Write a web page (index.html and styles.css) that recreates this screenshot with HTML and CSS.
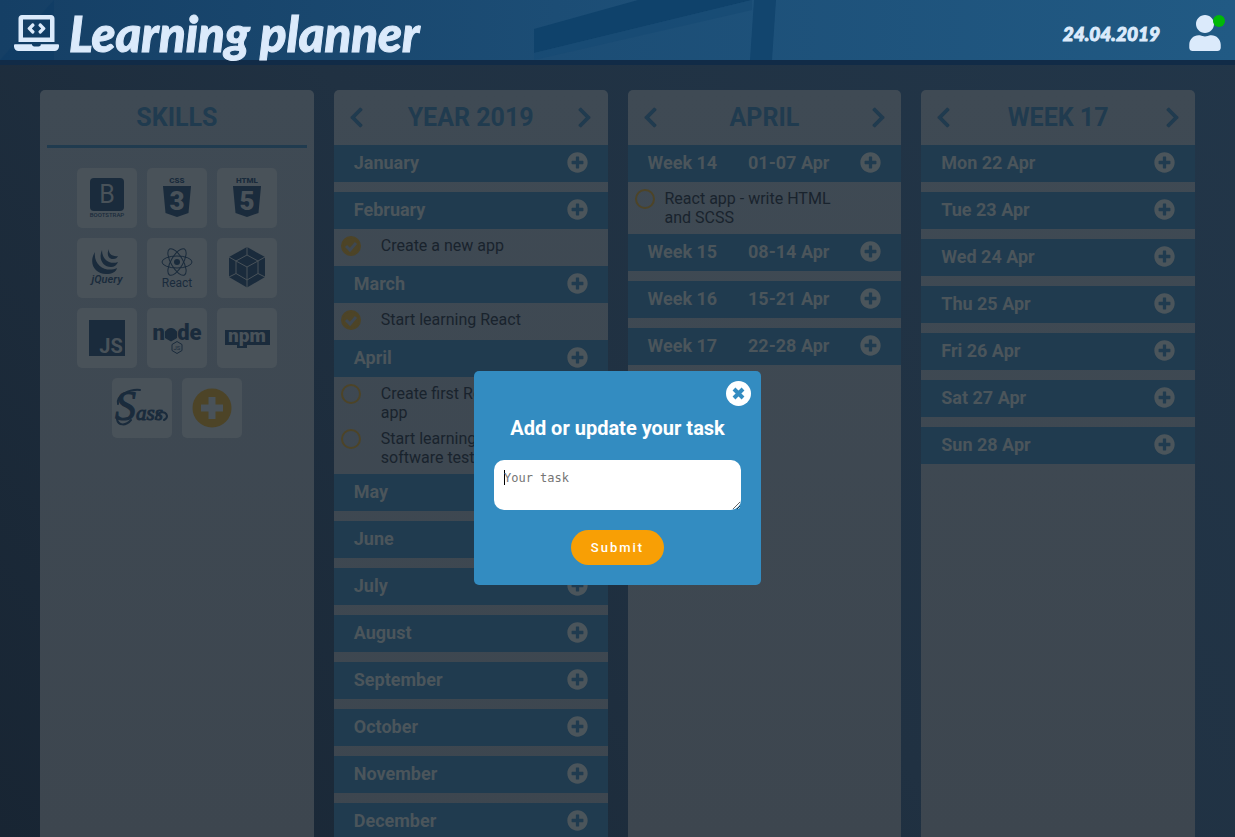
FILE: index.html
```html
<!DOCTYPE html>
<html lang="en">
<head>
<meta charset="utf-8">
<title>Learning planner</title>
<link rel="stylesheet" href="styles.css">
</head>
<body>
<svg class="sprite" aria-hidden="true">
  <symbol id="plus" viewBox="0 0 512 512"><path d="M256 8C119 8 8 119 8 256s111 248 248 248 248-111 248-248S393 8 256 8zm144 276c0 6.600-5.400 12-12 12h-92v92c0 6.600-5.400 12-12 12h-56c-6.600 0-12-5.400-12-12v-92h-92c-6.600 0-12-5.400-12-12v-56c0-6.600 5.400-12 12-12h92v-92c0-6.600 5.400-12 12-12h56c6.600 0 12 5.400 12 12v92h92c6.600 0 12 5.400 12 12v56z"/></symbol>
  <symbol id="prev" viewBox="0 0 320 512"><path d="M34.520 239.030L228.870 44.690c9.370-9.370 24.570-9.370 33.940 0l22.670 22.670c9.360 9.360 9.370 24.520.040 33.900L131.490 256l154.020 154.750c9.340 9.380 9.320 24.540-.040 33.900l-22.670 22.670c-9.370 9.370-24.570 9.370-33.940 0L34.520 272.970c-9.370-9.370-9.370-24.570 0-33.940z"/></symbol>
  <symbol id="next" viewBox="0 0 320 512"><path transform="matrix(-1 0 0 1 320 0)" d="M34.520 239.030L228.870 44.690c9.370-9.370 24.570-9.370 33.940 0l22.670 22.670c9.360 9.360 9.370 24.520.040 33.900L131.490 256l154.020 154.750c9.340 9.380 9.320 24.540-.040 33.900l-22.670 22.670c-9.370 9.370-24.570 9.370-33.940 0L34.520 272.970c-9.370-9.370-9.370-24.570 0-33.940z"/></symbol>
</svg>

<header class="header">
  <svg class="header-art" viewBox="0 0 1235 60" preserveAspectRatio="xMidYMin slice" aria-hidden="true">
    <path d="M0 60 L54 0 V60z" fill="#0c3a63" opacity=".5"/>
    <path d="M534 29 L638 0 H752 L534 53z" fill="#0f426b"/>
    <path d="M534 53 L752 0 V10 L534 60z" fill="#174a73" opacity=".7"/>
    <path d="M754 0h22l-4 60h-22z" fill="#12456e"/>
  </svg>
  <svg class="logo" viewBox="0 0 640 512" aria-hidden="true"><path d="M255.030 261.650c6.250 6.250 16.380 6.250 22.630 0l11.310-11.310c6.250-6.250 6.250-16.380 0-22.630L253.250 192l35.710-35.720c6.250-6.250 6.250-16.380 0-22.630l-11.310-11.310c-6.250-6.250-16.380-6.250-22.630 0l-58.340 58.340c-6.250 6.250-6.250 16.380 0 22.630l58.350 58.340zm96.010-11.300l11.310 11.310c6.250 6.250 16.380 6.250 22.630 0l58.340-58.340c6.250-6.250 6.250-16.380 0-22.630l-58.340-58.340c-6.250-6.250-16.380-6.250-22.630 0l-11.310 11.310c-6.250 6.250-6.250 16.380 0 22.630L386.750 192l-35.710 35.720c-6.250 6.250-6.250 16.380 0 22.630zM624 416H381.540c-.740 19.810-14.710 32-32.740 32H288c-18.690 0-33.020-17.470-32.770-32H16c-8.800 0-16 7.200-16 16v16c0 35.200 28.800 64 64 64h512c35.200 0 64-28.800 64-64v-16c0-8.800-7.200-16-16-16zM576 48c0-26.400-21.600-48-48-48H112C85.600 0 64 21.600 64 48v336h512V48zm-64 272H128V64h384v256z"/></svg>
  <h1 class="title">Learning planner</h1>
  <time class="date" datetime="2019-04-24">24.04.2019</time>
  <button class="user" aria-label="Account">
    <svg viewBox="0 0 448 512" aria-hidden="true"><path d="M224 256c70.700 0 128-57.300 128-128S294.700 0 224 0 96 57.300 96 128s57.300 128 128 128zm89.600 32h-16.700c-22.200 10.200-46.900 16-72.900 16s-50.600-5.800-72.900-16h-16.700C60.200 288 0 348.200 0 422.400V464c0 26.500 21.500 48 48 48h352c26.500 0 48-21.500 48-48v-41.600c0-74.200-60.200-134.400-134.400-134.400z"/></svg>
    <span class="online"></span>
  </button>
</header>

<main class="board">
  <section class="column">
    <div class="column-head skills-head"><h2>SKILLS</h2></div>
    <ul class="skills">
      <li class="tile"><svg viewBox="0 0 60 60" role="img" aria-label="Bootstrap"><rect x="13" y="10" width="34" height="33" rx="4"/><text class="cut" x="30" y="35" font-size="25">B</text><text x="30" y="49" font-size="6" font-weight="500">BOOTSTRAP</text></svg></li>
      <li class="tile"><svg viewBox="0 0 60 60" role="img" aria-label="CSS 3"><text x="30" y="15" font-size="8" font-weight="900">CSS</text><path d="M16 18h28l-2.500 27L30 49l-11.500-4z"/><text class="cut" x="30" y="42" font-size="26" font-weight="900">3</text></svg></li>
      <li class="tile"><svg viewBox="0 0 60 60" role="img" aria-label="HTML 5"><text x="30" y="15" font-size="8" font-weight="900">HTML</text><path d="M16 18h28l-2.500 27L30 49l-11.500-4z"/><text class="cut" x="30" y="42" font-size="26" font-weight="900">5</text></svg></li>
      <li class="tile"><svg viewBox="0 0 60 60" role="img" aria-label="jQuery"><path d="M18 14C11 25 18 36 29 36c6 0 10-2 11-6-10 5-24-2-22-16z"/><path d="M25 12c-4 9 1 17 9 17 3 0 6-2 7-5-8 3-16-2-16-12z"/><path d="M32 11c-3 6 0 10 4 10 3 0 4-1 5-3-5 1-10-2-9-7z"/><text x="30" y="45" font-size="11" font-weight="600" font-style="italic">jQuery</text></svg></li>
      <li class="tile"><svg viewBox="0 0 60 60" role="img" aria-label="React"><g class="line"><ellipse cx="30" cy="24" rx="15" ry="6"/><ellipse cx="30" cy="24" rx="15" ry="6" transform="rotate(60 30 24)"/><ellipse cx="30" cy="24" rx="15" ry="6" transform="rotate(120 30 24)"/></g><circle cx="30" cy="24" r="3"/><text x="30" y="49" font-size="12" font-weight="400">React</text></svg></li>
      <li class="tile"><svg viewBox="0 0 60 60" role="img" aria-label="Webpack"><path d="M30 9l18 10v20L30 49.500 12 39V19z"/><path class="gap" d="M30 17l11 6v12.500L30 42l-11-6.500V23zM30 9v8M48 19l-7 4M48 39l-7-3.500M30 50v-8M12 39l7-3.500M12 19l7 4M19 23l11 6 11-6M30 29v13"/></svg></li>
      <li class="tile"><svg viewBox="0 0 60 60" role="img" aria-label="JavaScript"><rect x="12" y="12" width="36" height="36"/><text class="cut" x="34" y="45" font-size="20" font-weight="700">JS</text></svg></li>
      <li class="tile"><svg viewBox="0 0 60 60" role="img" aria-label="Node"><text x="30" y="32" font-size="22" font-weight="900">node</text><path d="M24 20l6 3.500v6.500l-6 3.500-6-3.500v-6.500z"/><path class="line" d="M30 33.500l5 3v6l-5 3-5-3v-6z"/><text x="30" y="42" font-size="6">JS</text></svg></li>
      <li class="tile"><svg viewBox="0 0 60 60" role="img" aria-label="npm"><path d="M8 22h45v15H30v3h-10v-3H8z"/><text class="cut" x="30" y="34" font-size="19" font-weight="900">npm</text></svg></li>
      <li class="tile"><svg viewBox="0 0 60 60" role="img" aria-label="Sass"><text class="script" x="27" y="42" font-size="21"><tspan font-size="42">S</tspan>ass</text><path class="line swash" d="M44 41c1-8 10-9 11-3 0 2-1 3-3 4M6 26c-2-9 12-15 22-14M5 41c1 7 9 7 14 1"/></svg></li>
      <li><button class="tile add-skill" aria-label="Add skill"><svg viewBox="0 0 60 60" aria-hidden="true"><circle cx="30" cy="30" r="19.500"/><path class="cross" d="M30 19v22M19 30h22"/></svg></button></li>
    </ul>
  </section>

  <section class="column">
    <div class="column-head"><button aria-label="Previous year"><svg><use href="#prev"/></svg></button><h2>YEAR 2019</h2><button aria-label="Next year"><svg><use href="#next"/></svg></button></div>
    <div class="period"><h3>January</h3><button aria-label="Add to January"><svg><use href="#plus"/></svg></button></div>
    <div class="period"><h3>February</h3><button aria-label="Add to February"><svg><use href="#plus"/></svg></button></div>
    <ul class="tasks year-tasks"><li><input type="checkbox" id="t1" checked><label for="t1">Create a new app</label></li></ul>
    <div class="period"><h3>March</h3><button aria-label="Add to March"><svg><use href="#plus"/></svg></button></div>
    <ul class="tasks year-tasks"><li><input type="checkbox" id="t2" checked><label for="t2">Start learning React</label></li></ul>
    <div class="period"><h3>April</h3><button aria-label="Add to April"><svg><use href="#plus"/></svg></button></div>
    <ul class="tasks year-tasks"><li><input type="checkbox" id="t3"><label for="t3">Create first React app</label></li><li><input type="checkbox" id="t4"><label for="t4">Start learning software testing</label></li></ul>
    <div class="period"><h3>May</h3><button aria-label="Add to May"><svg><use href="#plus"/></svg></button></div>
    <div class="period"><h3>June</h3><button aria-label="Add to June"><svg><use href="#plus"/></svg></button></div>
    <div class="period"><h3>July</h3><button aria-label="Add to July"><svg><use href="#plus"/></svg></button></div>
    <div class="period"><h3>August</h3><button aria-label="Add to August"><svg><use href="#plus"/></svg></button></div>
    <div class="period"><h3>September</h3><button aria-label="Add to September"><svg><use href="#plus"/></svg></button></div>
    <div class="period"><h3>October</h3><button aria-label="Add to October"><svg><use href="#plus"/></svg></button></div>
    <div class="period"><h3>November</h3><button aria-label="Add to November"><svg><use href="#plus"/></svg></button></div>
    <div class="period"><h3>December</h3><button aria-label="Add to December"><svg><use href="#plus"/></svg></button></div>
  </section>

  <section class="column">
    <div class="column-head"><button aria-label="Previous month"><svg><use href="#prev"/></svg></button><h2>APRIL</h2><button aria-label="Next month"><svg><use href="#next"/></svg></button></div>
    <div class="period"><h3>Week 14</h3><span>01-07 Apr</span><button aria-label="Add to week 14"><svg><use href="#plus"/></svg></button></div>
    <ul class="tasks"><li><input type="checkbox" id="t5"><label for="t5">React app - write HTML and SCSS</label></li></ul>
    <div class="period"><h3>Week 15</h3><span>08-14 Apr</span><button aria-label="Add to week 15"><svg><use href="#plus"/></svg></button></div>
    <div class="period"><h3>Week 16</h3><span>15-21 Apr</span><button aria-label="Add to week 16"><svg><use href="#plus"/></svg></button></div>
    <div class="period"><h3>Week 17</h3><span>22-28 Apr</span><button aria-label="Add to week 17"><svg><use href="#plus"/></svg></button></div>
  </section>

  <section class="column">
    <div class="column-head"><button aria-label="Previous week"><svg><use href="#prev"/></svg></button><h2>WEEK 17</h2><button aria-label="Next week"><svg><use href="#next"/></svg></button></div>
    <div class="period"><h3>Mon 22 Apr</h3><button aria-label="Add to Monday"><svg><use href="#plus"/></svg></button></div>
    <div class="period"><h3>Tue 23 Apr</h3><button aria-label="Add to Tuesday"><svg><use href="#plus"/></svg></button></div>
    <div class="period"><h3>Wed 24 Apr</h3><button aria-label="Add to Wednesday"><svg><use href="#plus"/></svg></button></div>
    <div class="period"><h3>Thu 25 Apr</h3><button aria-label="Add to Thursday"><svg><use href="#plus"/></svg></button></div>
    <div class="period"><h3>Fri 26 Apr</h3><button aria-label="Add to Friday"><svg><use href="#plus"/></svg></button></div>
    <div class="period"><h3>Sat 27 Apr</h3><button aria-label="Add to Saturday"><svg><use href="#plus"/></svg></button></div>
    <div class="period"><h3>Sun 28 Apr</h3><button aria-label="Add to Sunday"><svg><use href="#plus"/></svg></button></div>
  </section>
</main>

<div class="overlay">
  <form class="modal" role="dialog" aria-labelledby="modal-title">
    <button type="button" class="close" aria-label="Close"><svg viewBox="0 0 25 25" aria-hidden="true"><circle cx="12.500" cy="12.500" r="12.500"/><path d="M8 8l9 9M17 8l-9 9"/></svg></button>
    <label class="modal-title" id="modal-title" for="task">Add or update your task</label>
    <textarea id="task" placeholder="Your task" autofocus></textarea>
    <button type="submit" class="submit">Submit</button>
  </form>
</div>
</body>
</html>
```
FILE: styles.css
```css
* {
  box-sizing: border-box;
}

html,
body {
  height: 100%;
  margin: 0;
}

body {
  display: flex;
  flex-direction: column;
  overflow: hidden;
  font-family: Roboto, "Liberation Sans", sans-serif;
  font-size: 16px;
  line-height: 19px;
  background: linear-gradient(50deg, #182533, #203142 50%, #223649);
}

h1,
h2,
h3,
ul {
  margin: 0;
  padding: 0;
  list-style: none;
}

button {
  padding: 0;
  border: 0;
  background: none;
  font-family: inherit;
  cursor: pointer;
}

svg {
  display: block;
  fill: currentColor;
}

.sprite {
  position: absolute;
  width: 0;
  height: 0;
}

.header {
  position: relative;
  flex: none;
  display: flex;
  align-items: center;
  height: 65px;
  padding: 6px 14px 0;
  border-bottom: 5px solid #112b47;
  background: linear-gradient(90deg, #153f65, #1c4d75 45%, #215a84);
  color: #dbeafb;
}

.header-art {
  position: absolute;
  inset: 0;
  width: 100%;
  height: 100%;
}

.logo,
.title,
.date,
.user {
  position: relative;
}

.logo {
  width: 45px;
  height: 36px;
}

.title {
  margin-left: 10px;
  font-family: Lato, sans-serif;
  font-size: 49px;
  font-style: italic;
  font-weight: 900;
  line-height: 54px;
  -webkit-text-stroke: 1px currentColor;
}

.date {
  margin-left: auto;
  font-family: Lato, sans-serif;
  font-size: 19px;
  font-style: italic;
  font-weight: 900;
  -webkit-text-stroke: 1px currentColor;
}

.user {
  margin-left: 29px;
  color: inherit;
}

.user svg {
  width: 32px;
  height: 36px;
}

.online {
  position: absolute;
  top: 0;
  right: -4px;
  width: 12px;
  height: 12px;
  border-radius: 50%;
  background: #00b906;
}

.board {
  flex: 1;
  min-height: 0;
  display: grid;
  grid-template-columns: repeat(4, 1fr);
  gap: 20px;
  padding: 25px 40px 0;
}

.column {
  min-height: 0;
  overflow: hidden;
  border-radius: 5px 5px 0 0;
  background: linear-gradient(#3f4a54, #3d464f);
}

.column-head {
  display: flex;
  align-items: center;
  justify-content: space-between;
  height: 55px;
  padding: 0 15px;
  color: #203b4f;
}

.column-head h2 {
  font-size: 25px;
  font-weight: 700;
  line-height: 30px;
}

.column-head svg {
  width: 15px;
  height: 23px;
  stroke: currentColor;
  stroke-width: 1;
}

.column-head button {
  color: inherit;
}

.skills-head {
  justify-content: center;
  height: 58px;
  margin: 0 7px 20px;
  border-bottom: 3px solid #203b4f;
}

.skills {
  display: flex;
  flex-wrap: wrap;
  justify-content: center;
  gap: 10px;
  max-width: 220px;
  margin: 0 auto;
}

.tile {
  display: block;
  width: 60px;
  height: 60px;
  border-radius: 5px;
  background: #495259;
  color: #1a2b3c;
}

.tile text {
  text-anchor: middle;
}

.tile .cut {
  fill: #495259;
}

.tile .line {
  fill: none;
  stroke: currentColor;
  stroke-width: 1;
}

.tile .swash {
  stroke-width: 2;
  stroke-linecap: round;
}

.tile .gap {
  fill: none;
  stroke: #495259;
  stroke-width: 1;
}

.tile .script {
  font-family: "Liberation Serif", serif;
  font-style: italic;
  font-weight: 400;
  stroke: currentColor;
  stroke-width: 1;
}

.tile.add-skill {
  color: #4d4427;
}

.cross {
  stroke: #495259;
  stroke-width: 7;
}

.period {
  display: flex;
  align-items: center;
  justify-content: space-between;
  height: 37px;
  padding: 0 20px 2px;
  background: #203b4f;
  color: #4b555b;
  font-size: 18px;
  font-weight: 700;
}

.period + .period {
  margin-top: 10px;
}

.period h3 {
  font-size: 18px;
}

.period button {
  color: inherit;
}

.period svg {
  width: 21px;
  height: 21px;
}

.tasks {
  display: grid;
  gap: 7px;
  padding: 7px;
}

.tasks li {
  display: flex;
  align-items: flex-start;
  gap: 10px;
  min-height: 23px;
  color: #19232d;
}

.year-tasks li {
  gap: 20px;
}

.tasks label {
  max-width: 180px;
}

.year-tasks label {
  max-width: 150px;
}

.tasks input {
  flex: none;
  width: 20px;
  height: 20px;
  margin: 0;
  appearance: none;
  border: 2px solid #4d4427;
  border-radius: 50%;
}

.tasks input:checked {
  background: #4d4427 url("data:image/svg+xml,%3Csvg xmlns='http://www.w3.org/2000/svg' viewBox='0 0 16 16'%3E%3Cpath d='M3 8l4 4 6-7' fill='none' stroke='%233e4852' stroke-width='3'/%3E%3C/svg%3E") center / 16px no-repeat;
}

.overlay {
  position: fixed;
  inset: 0;
  display: flex;
  align-items: center;
  justify-content: center;
  padding-top: 119px;
}

.modal {
  position: relative;
  display: flex;
  flex-direction: column;
  align-items: center;
  gap: 20px;
  width: 287px;
  padding: 45px 20px 20px;
  border-radius: 5px;
  background: #338cc1;
  color: #fff;
}

.close {
  position: absolute;
  top: 10px;
  right: 10px;
  color: #fff;
}

.close svg {
  width: 25px;
  height: 25px;
}

.close path {
  stroke: #338cc1;
  stroke-width: 4;
}

.modal-title {
  font-size: 20px;
  font-weight: 700;
  line-height: 24px;
}

.modal textarea {
  display: block;
  width: 100%;
  height: 50px;
  padding: 10px;
  border: 0;
  border-radius: 10px;
  outline: 0;
  background: #fff;
  color: #222;
  font-family: "DejaVu Sans Mono", monospace;
  font-size: 12px;
  line-height: 16px;
}

.modal textarea:placeholder-shown {
  background: linear-gradient(#000, #000) 10px 10px / 1px 15px no-repeat #fff;
  caret-color: transparent;
}

.modal textarea::placeholder {
  color: #757575;
}

.submit {
  height: 35px;
  padding: 0 20px;
  border-radius: 18px;
  background: #f89f05;
  color: #fff;
  font-size: 13px;
  font-weight: 500;
  letter-spacing: 2px;
}
```
